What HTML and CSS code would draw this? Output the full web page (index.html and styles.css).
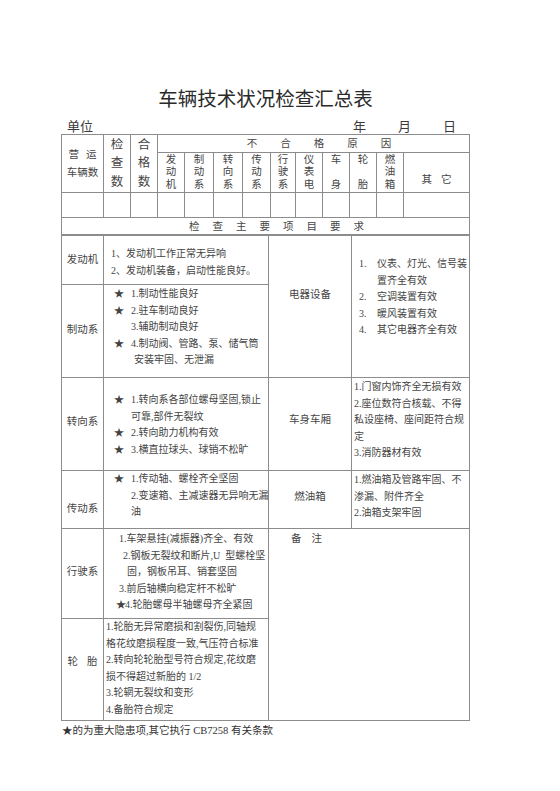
FILE: index.html
```html
<!DOCTYPE html>
<html lang="zh-CN">
<head>
<meta charset="utf-8">
<title>车辆技术状况检查汇总表</title>
<link rel="stylesheet" href="styles.css">
</head>
<body>
<div class="page">
  <h1 class="title">车辆技术状况检查汇总表</h1>
  <div class="unit-row">
    <span class="unit">单位</span>
    <span class="date"><span>年</span><span>月</span><span>日</span></span>
  </div>
  <table class="grid head">
    <colgroup>
      <col class="c42"><col class="c27"><col class="c27"><col class="c27"><col class="c29"><col class="c29"><col class="c28"><col class="c25"><col class="c27"><col class="c27"><col class="c27"><col class="c27"><col class="c66">
    </colgroup>
    <tr class="h1">
      <td rowspan="2" class="yy"><span class="gap8">营</span>运<br>车辆数</td>
      <td rowspan="2" class="big">检<br>查<br>数</td>
      <td rowspan="2" class="big">合<br>格<br>数</td>
      <td colspan="10" class="bhg">不合格原因</td>
    </tr>
    <tr class="h2">
      <td class="vt">发<br>动<br>机</td>
      <td class="vt">制<br>动<br>系</td>
      <td class="vt">转<br>向<br>系</td>
      <td class="vt">传<br>动<br>系</td>
      <td class="vt">行<br>驶<br>系</td>
      <td class="vt">仪<br>表<br>电</td>
      <td class="vt">车<br><br>身</td>
      <td class="vt">轮<br><br>胎</td>
      <td class="vt">燃<br>油<br>箱</td>
      <td class="qt"><span class="gap9">其</span>它</td>
    </tr>
    <tr class="h3">
      <td></td><td></td><td></td><td></td><td></td><td></td><td></td><td></td><td></td><td></td><td></td><td></td><td></td>
    </tr>
    <tr class="h4">
      <td colspan="13" class="req">检查主要项目要求</td>
    </tr>
  </table>
  <table class="grid body">
    <colgroup>
      <col class="b42"><col class="b165"><col class="b83"><col class="b118">
    </colgroup>
    <tr class="ra">
      <td class="lbl l-fdj">发动机</td>
      <td class="txt t-fdj">
        <div class="ln">1、发动机工作正常无异响</div>
        <div class="ln">2、发动机装备，启动性能良好。</div>
      </td>
      <td class="lbl l-dq" rowspan="2">电器设备</td>
      <td class="txt t-dq" rowspan="2">
        <div class="ln"><span class="n2">1.</span>仪表、灯光、信号装</div>
        <div class="ln"><span class="n2"></span>置齐全有效</div>
        <div class="ln"><span class="n2">2.</span>空调装置有效</div>
        <div class="ln"><span class="n2">3.</span>暖风装置有效</div>
        <div class="ln"><span class="n2">4.</span>其它电器齐全有效</div>
      </td>
    </tr>
    <tr class="rb">
      <td class="lbl l-zd">制动系</td>
      <td class="txt t-zd">
        <div class="ln"><span class="st">★</span>1.制动性能良好</div>
        <div class="ln"><span class="st">★</span>2.驻车制动良好</div>
        <div class="ln"><span class="st"></span>3.辅助制动良好</div>
        <div class="ln"><span class="st">★</span>4.制动阀、管路、泵、储气筒</div>
        <div class="ln"><span class="st"></span><span class="ind">安装牢固、无泄漏</span></div>
      </td>
    </tr>
    <tr class="rc">
      <td class="lbl l-zx">转向系</td>
      <td class="txt t-zx">
        <div class="ln"><span class="st">★</span>1.转向系各部位螺母坚固,锁止</div>
        <div class="ln"><span class="st"></span>可靠,部件无裂纹</div>
        <div class="ln"><span class="st">★</span>2.转向助力机构有效</div>
        <div class="ln"><span class="st">★</span>3.横直拉球头、球销不松旷</div>
      </td>
      <td class="lbl l-cs">车身车厢</td>
      <td class="txt t-cs">
        <div class="ln">1.门窗内饰齐全无损有效</div>
        <div class="ln">2.座位数符合核载、不得</div>
        <div class="ln">私设座椅、座间距符合规</div>
        <div class="ln">定</div>
        <div class="ln">3.消防器材有效</div>
      </td>
    </tr>
    <tr class="rd">
      <td class="lbl l-cd">传动系</td>
      <td class="txt t-cd">
        <div class="ln"><span class="st">★</span>1.传动轴、螺栓齐全坚固</div>
        <div class="ln"><span class="st"></span>2.变速箱、主减速器无异响无漏</div>
        <div class="ln"><span class="st"></span>油</div>
      </td>
      <td class="lbl l-ry">燃油箱</td>
      <td class="txt t-ry">
        <div class="ln">1.燃油箱及管路牢固、不</div>
        <div class="ln">渗漏、附件齐全</div>
        <div class="ln">2.油箱支架牢固</div>
      </td>
    </tr>
    <tr class="re">
      <td class="lbl l-xs">行驶系</td>
      <td class="txt t-xs">
        <div class="ln i1">1.车架悬挂(减振器)齐全、有效</div>
        <div class="ln i2">2.钢板无裂纹和断片,U&nbsp; 型螺栓坚</div>
        <div class="ln i3">固，钢板吊耳、销套坚固</div>
        <div class="ln i1">3.前后轴横向稳定杆不松旷</div>
        <div class="ln i0"><span class="st2">★</span>4.轮胎螺母半轴螺母齐全紧固</div>
      </td>
      <td class="note" colspan="2" rowspan="2"><span class="gap10">备</span>注</td>
    </tr>
    <tr class="rf">
      <td class="lbl l-lt"><span class="gap9">轮</span>胎</td>
      <td class="txt t-lt">
        <div class="ln">1.轮胎无异常磨损和割裂伤,同轴规</div>
        <div class="ln">格花纹磨损程度一致,气压符合标准</div>
        <div class="ln">2.转向轮轮胎型号符合规定,花纹磨</div>
        <div class="ln">损不得超过新胎的 1/2</div>
        <div class="ln">3.轮辋无裂纹和变形</div>
        <div class="ln">4.备胎符合规定</div>
      </td>
    </tr>
  </table>
  <p class="foot">★的为重大隐患项,其它执行 CB7258 有关条款</p>
</div>
</body>
</html>
```

FILE: styles.css
```css
html, body {
  margin: 0;
  padding: 0;
  background: #ffffff;
}
body {
  font-family: "Liberation Serif", "Noto Sans CJK SC", serif;
  color: #3a3a3a;
}
.page {
  width: 409px;
  margin-left: 61px;
  padding-top: 89px;
}
.title {
  margin: 0;
  font-size: 19.5px;
  font-weight: normal;
  line-height: 22px;
  text-align: center;
  color: #2a2a2a;
}
.unit-row {
  display: flex;
  align-items: center;
  margin-top: 9px;
  height: 14px;
  font-size: 13px;
  line-height: 14px;
  padding-left: 6px;
  padding-right: 14px;
}
.date {
  margin-left: auto;
  display: flex;
  gap: 32px;
}
.grid {
  border-collapse: collapse;
  table-layout: fixed;
  width: 409px;
}
.grid td {
  border: 1px solid #8c8c8c;
  padding: 0;
  text-align: center;
  font-size: 10.5px;
  color: #444;
  white-space: nowrap;
}
.c42 { width: 42px; }
.c27 { width: 27px; }
.c28 { width: 28px; }
.c29 { width: 29px; }
.c25 { width: 25px; }
.c66 { width: 66px; }
.h1 { height: 18px; }
.h2 { height: 40px; }
.h3 { height: 25px; }
.h4 { height: 17px; }
.yy {
  line-height: 18px;
}
.gap8 { margin-right: 7px; }
.gap9 { margin-right: 9px; }
.gap10 { margin-right: 10px; }
.big {
  font-size: 12.5px !important;
  line-height: 18.5px;
}
.bhg {
  letter-spacing: 23px;
  padding-left: 34px !important;
  line-height: 16px;
}
.vt {
  line-height: 12.5px;
}
.qt {
  padding-top: 12px !important;
}
.req {
  letter-spacing: 13px;
  padding-left: 35px !important;
  line-height: 15px;
}
.body td {
  vertical-align: top;
  line-height: 16.5px;
}
.b42 { width: 42px; }
.b165 { width: 165px; }
.b83 { width: 83px; }
.b118 { width: 118px; }
.ra { height: 49px; }
.rb { height: 93px; }
.rc { height: 93px; }
.rd { height: 58px; }
.re { height: 90px; }
.rf { height: 102px; }
.body .txt {
  text-align: left;
  font-size: 10px;
}
.ln {
  display: flex;
  height: 16.5px;
}
.n2 { width: 18px; flex: none; }
.st { width: 17px; flex: none; font-size: 10px; }
.st2 { width: 9px; flex: none; font-size: 10px; }
.ind { padding-left: 3px; }
.i0 { padding-left: 2px; }
.i1 { padding-left: 5px; }
.i2 { padding-left: 9px; }
.i3 { padding-left: 13px; }
.body .l-fdj { padding-top: 16px; }
.body .l-zd { padding-top: 37px; }
.body .l-zx { padding-top: 36px; }
.body .l-cd { padding-top: 30px; }
.body .l-xs { padding-top: 35px; }
.body .l-lt { padding-top: 35px; }
.body .l-dq { padding-top: 51px; }
.body .l-cs { padding-top: 34px; }
.body .l-ry { padding-top: 18px; }
.body .t-fdj { padding: 10px 0 0 7px; }
.body .t-dq { padding: 20px 0 0 7px; }
.body .t-zd { padding: 1px 0 0 10px; }
.body .t-zx { padding: 14px 0 0 10px; }
.body .t-cs { padding: 1px 0 0 2px; }
.body .t-cd { padding: 0 0 0 10px; }
.body .t-ry { padding: 1px 0 0 2px; }
.body .t-xs { padding: 2px 0 0 10px; }
.body .t-lt { padding: 0 0 0 2px; }
.body .note {
  text-align: left;
  padding: 2px 0 0 22px;
}
.foot {
  margin: 2px 0 0 1px;
  font-size: 10.5px;
  line-height: 16px;
  color: #333;
}
```
